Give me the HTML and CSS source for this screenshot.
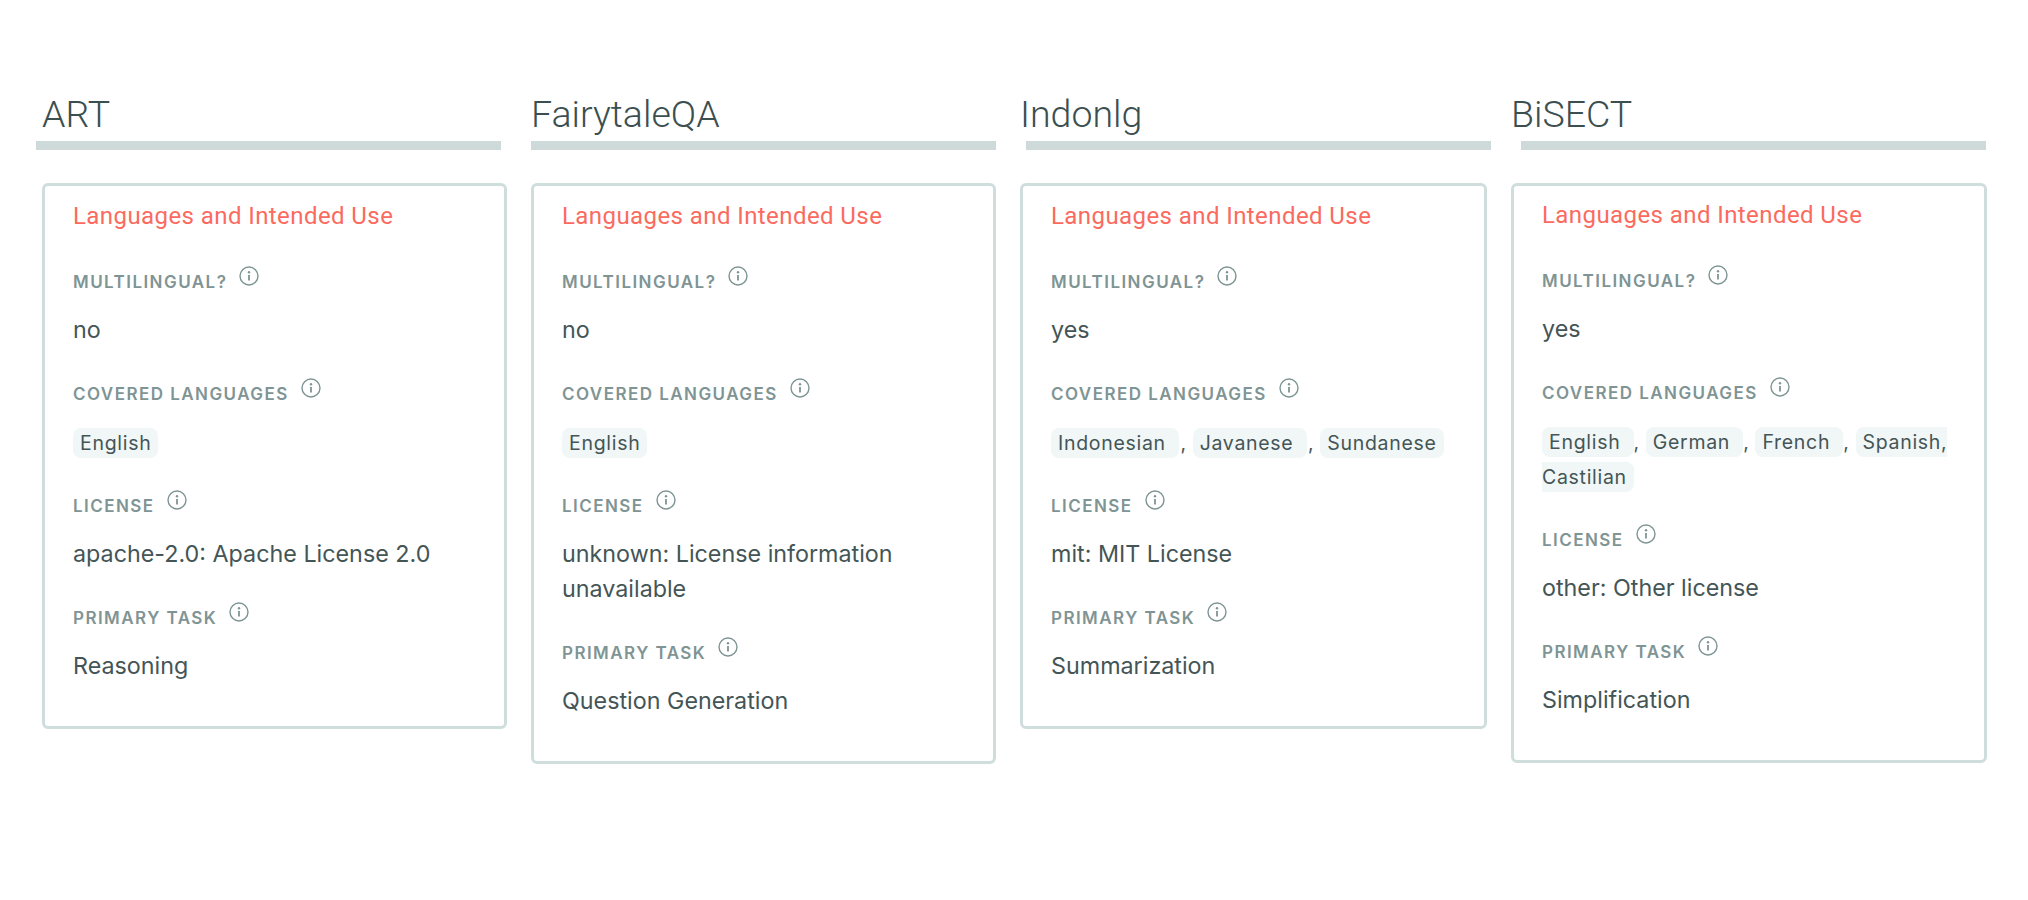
FILE: index.html
```html
<!DOCTYPE html>
<html lang="en">
<head>
<meta charset="utf-8">
<title>Dataset cards</title>
<link rel="stylesheet" href="styles.css">
</head>
<body>
<svg class="defs" width="0" height="0" aria-hidden="true"><symbol id="info" viewBox="0 0 20 20"><circle cx="10" cy="10" r="9" fill="none" stroke="currentColor" stroke-width="1.4"/><path d="M10 9v5.4" fill="none" stroke="currentColor" stroke-width="1.8"/><circle cx="10" cy="6.2" r="1.2" fill="currentColor"/></symbol></svg>
<main class="board">
  <section class="col col-a">
    <h2 class="title">ART</h2>
    <div class="bar"></div>
    <div class="card">
      <h3 class="heading">Languages and Intended Use</h3>
      <div class="label"><span>Multilingual?</span><svg class="info"><use href="#info"/></svg></div>
      <p class="value">no</p>
      <div class="label"><span>Covered Languages</span><svg class="info"><use href="#info"/></svg></div>
      <p class="value"><span class="pill">English</span></p>
      <div class="label"><span>License</span><svg class="info"><use href="#info"/></svg></div>
      <p class="value">apache-2.0: Apache License 2.0</p>
      <div class="label"><span>Primary Task</span><svg class="info"><use href="#info"/></svg></div>
      <p class="value">Reasoning</p>
    </div>
  </section>
  <section class="col col-b">
    <h2 class="title">FairytaleQA</h2>
    <div class="bar"></div>
    <div class="card">
      <h3 class="heading">Languages and Intended Use</h3>
      <div class="label"><span>Multilingual?</span><svg class="info"><use href="#info"/></svg></div>
      <p class="value">no</p>
      <div class="label"><span>Covered Languages</span><svg class="info"><use href="#info"/></svg></div>
      <p class="value"><span class="pill">English</span></p>
      <div class="label"><span>License</span><svg class="info"><use href="#info"/></svg></div>
      <p class="value">unknown: License information unavailable</p>
      <div class="label"><span>Primary Task</span><svg class="info"><use href="#info"/></svg></div>
      <p class="value">Question Generation</p>
    </div>
  </section>
  <section class="col col-c">
    <h2 class="title">Indonlg</h2>
    <div class="bar"></div>
    <div class="card">
      <h3 class="heading">Languages and Intended Use</h3>
      <div class="label"><span>Multilingual?</span><svg class="info"><use href="#info"/></svg></div>
      <p class="value">yes</p>
      <div class="label"><span>Covered Languages</span><svg class="info"><use href="#info"/></svg></div>
      <p class="value"><span class="pill">Indonesian&nbsp;</span><span class="comma">,</span> <span class="pill">Javanese&nbsp;</span><span class="comma">,</span> <span class="pill">Sundanese</span></p>
      <div class="label"><span>License</span><svg class="info"><use href="#info"/></svg></div>
      <p class="value">mit: MIT License</p>
      <div class="label"><span>Primary Task</span><svg class="info"><use href="#info"/></svg></div>
      <p class="value">Summarization</p>
    </div>
  </section>
  <section class="col col-d">
    <h2 class="title">BiSECT</h2>
    <div class="bar"></div>
    <div class="card">
      <h3 class="heading">Languages and Intended Use</h3>
      <div class="label"><span>Multilingual?</span><svg class="info"><use href="#info"/></svg></div>
      <p class="value">yes</p>
      <div class="label"><span>Covered Languages</span><svg class="info"><use href="#info"/></svg></div>
      <p class="value"><span class="pill">English&nbsp;</span><span class="comma">,</span> <span class="pill">German&nbsp;</span><span class="comma">,</span> <span class="pill">French&nbsp;</span><span class="comma">,</span> <span class="pill">Spanish, Castilian</span></p>
      <div class="label"><span>License</span><svg class="info"><use href="#info"/></svg></div>
      <p class="value">other: Other license</p>
      <div class="label"><span>Primary Task</span><svg class="info"><use href="#info"/></svg></div>
      <p class="value">Simplification</p>
    </div>
  </section>
</main>
</body>
</html>
```

FILE: styles.css
```css
* { box-sizing: border-box; }
html, body { margin: 0; background: #fff; }
body { font-family: Inter, "Liberation Sans", sans-serif; color: #3c4f50; height: 900px; overflow: hidden; }
.defs { display: block; height: 0; }
.board { display: flex; align-items: flex-start; gap: 24px; padding: 92px 0 0 42px; }
.col { width: 465px; flex: none; }
.col-d { width: 476px; margin-left: 2px; }
.title { margin: 0; font: 300 37.5px/44px Roboto, sans-serif; color: #3c4f50; }
.bar { width: 465px; height: 9px; margin-top: 5px; background: #cddad9; }
.col-a .bar { margin-left: -6px; }
.col-c .bar { margin-left: 6px; }
.col-d .bar { margin-left: 10px; }
.card { margin-top: 33px; border: 3px solid #cfdedd; border-radius: 6px; padding: 15px 28px 12px; }
.col-c .card { width: 467px; }
.col-d .card { padding: 14px 20px 12px 28px; }
.heading { margin: 0 0 35px; font: 400 24px/30px Roboto, sans-serif; letter-spacing: 0.42px; color: #fb6a5e; }
.label { display: flex; align-items: flex-start; gap: 12px; height: 24px; margin-bottom: 22px; font-size: 17px; font-weight: 600; line-height: 24px; letter-spacing: 1.45px; text-transform: uppercase; color: #7f9494; }
.label span { padding-top: 4px; }
.info { width: 20px; height: 20px; flex: none; color: #7f9494; }
.value { margin: 0 0 31px; font-size: 23.3px; line-height: 35px; color: #445556; }
.pill { padding: 3px 7px; border-radius: 8px; background: #f1f6f6; font-size: 19.5px; line-height: 1; letter-spacing: 0.7px; }
.comma { font-size: 19.5px; line-height: 1; margin-left: 1.5px; }
.col-d .comma { margin-left: 0; }
```
